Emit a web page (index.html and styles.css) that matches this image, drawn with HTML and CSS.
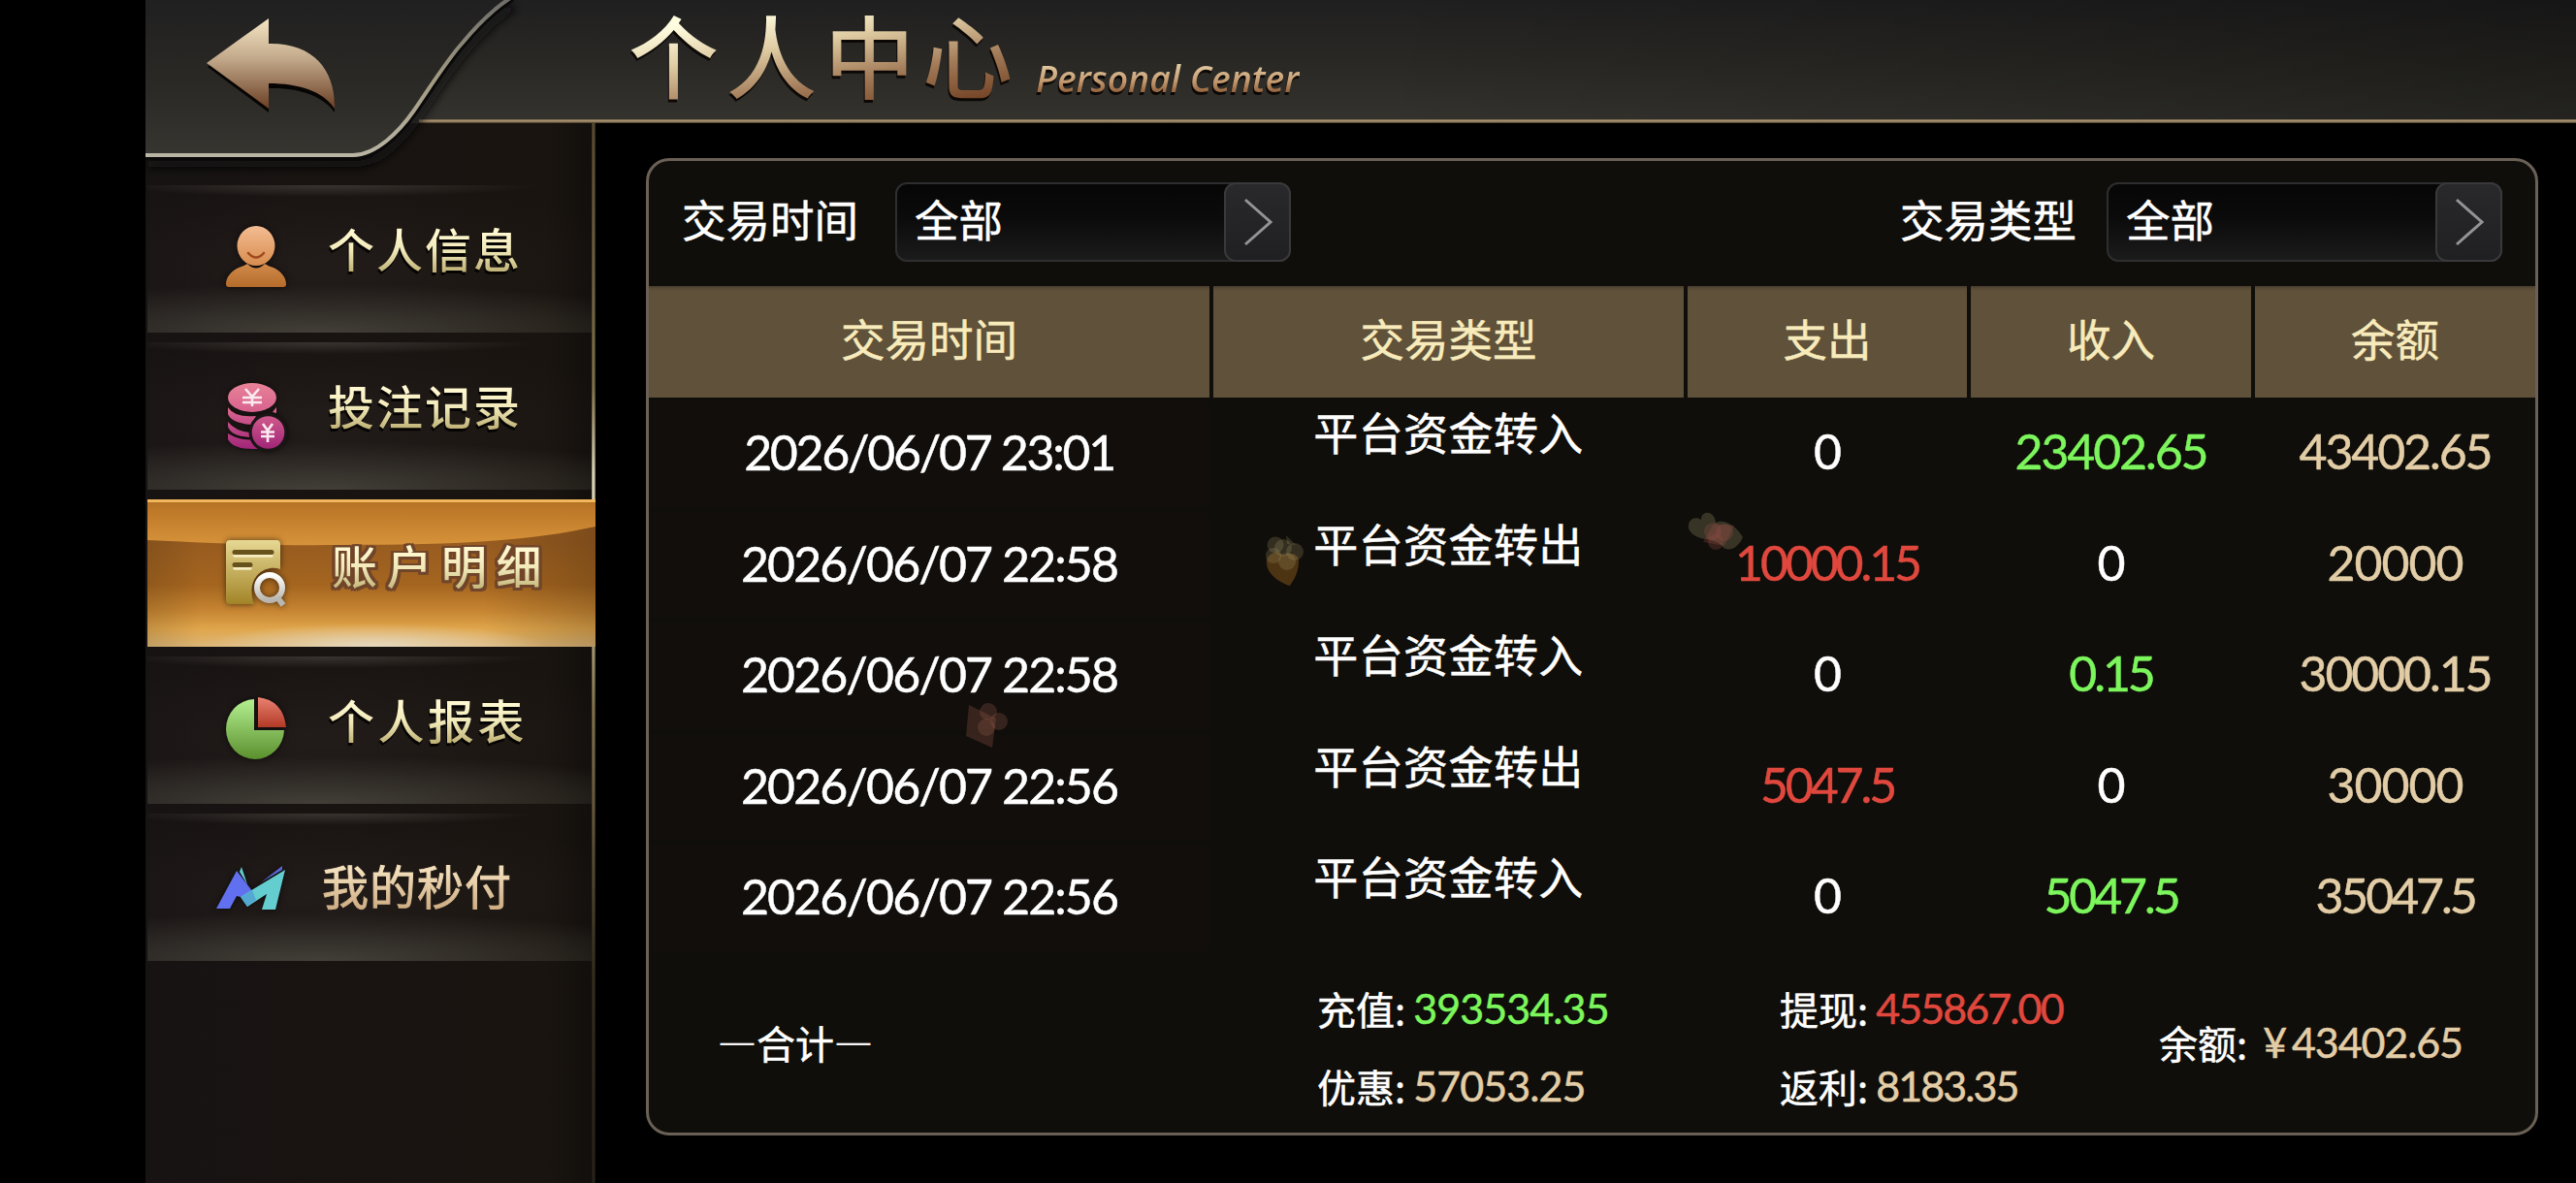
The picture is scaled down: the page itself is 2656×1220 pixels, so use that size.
FILE: index.html
```html
<!DOCTYPE html>
<html lang="zh-CN">
<head>
<meta charset="utf-8">
<title>个人中心</title>
<link rel="stylesheet" href="styles.css">
</head>
<body>
<div class="app">
  <header class="topbar">
    <svg class="topbar-corner" width="400" height="190" viewBox="0 0 400 190">
      <defs>
        <linearGradient id="cornerFill" x1="0" y1="0" x2="0" y2="1">
          <stop offset="0" stop-color="#212021"/><stop offset=".55" stop-color="#2a2925"/><stop offset="1" stop-color="#363530"/>
        </linearGradient>
        <linearGradient id="cornerLine" x1="0" y1="0" x2="0" y2="1">
          <stop offset="0" stop-color="#6d6c68"/><stop offset=".5" stop-color="#a09a82"/><stop offset="1" stop-color="#b9b4a3"/>
        </linearGradient>
        <linearGradient id="arrowFill" x1="0" y1="0" x2="0" y2="1">
          <stop offset="0" stop-color="#f4e6c4"/><stop offset=".45" stop-color="#c2a88a"/><stop offset="1" stop-color="#6b3f24"/>
        </linearGradient>
        <filter id="cornerShadow" x="-10%" y="-10%" width="120%" height="130%"><feGaussianBlur stdDeviation="5"/></filter>
      </defs>
      <path d="M0 160H214C238 160 262 135 276 115C290 95 312 60 327 44C340 28 355 12 376 -2" fill="none" stroke="#0b0a0d" stroke-width="8" filter="url(#cornerShadow)" transform="translate(3 9)"/>
      <path d="M0 0H374C355 12 340 28 327 44C312 60 290 95 276 115C262 135 238 160 214 160H0Z" fill="url(#cornerFill)"/>
      <path d="M0 163H215C240 163 265 137 279 117C293 97 315 62 330 46C343 30 358 14 379 0" fill="none" stroke="#0a0909" stroke-width="3"/>
      <path d="M0 160H214C238 160 262 135 276 115C290 95 312 60 327 44C340 28 355 12 376 -2" fill="none" stroke="url(#cornerLine)" stroke-width="4"/>
      <path d="M64 69L127 23V48C176 48 196 78 195 116C184 100 160 90 127 91V116Z" fill="#070504"/>
      <path d="M63 65L127 19V45C173 44 196 72 195 112C183 94 158 86 127 86V112Z" fill="url(#arrowFill)"/>
    </svg>
    <h1 class="title">个人中心</h1>
    <span class="subtitle">Personal Center</span>
  </header>

  <div class="content">
    <nav class="sidebar">
      <a class="nav-item">
        <svg class="nav-icon" viewBox="0 0 72 72">
          <defs><linearGradient id="face" x1="0" y1="0" x2="0" y2="1"><stop offset="0" stop-color="#f3bd92"/><stop offset="1" stop-color="#d88c4e"/></linearGradient>
          <linearGradient id="torso" x1="0" y1="0" x2="0" y2="1"><stop offset="0" stop-color="#d18a4b"/><stop offset="1" stop-color="#b56c2b"/></linearGradient></defs>
          <path d="M18 45C22 44 25 42 27 41Q36 50 45 41C48 43 51 44 54 45C62 49 67 55 67 62Q67 65 64 65H8Q5 65 5 62C5 55 10 49 18 45Z" fill="url(#torso)"/>
          <ellipse cx="36" cy="22.500" rx="19.500" ry="20.500" fill="url(#face)"/>
          <path d="M28 30Q36 39 44 30" fill="none" stroke="#a04a20" stroke-width="2.600" stroke-linecap="round"/>
        </svg>
        <span class="nav-label">个人信息</span>
      </a>
      <a class="nav-item">
        <svg class="nav-icon" viewBox="0 0 72 72">
          <defs><linearGradient id="stack" gradientUnits="userSpaceOnUse" x1="0" y1="2" x2="0" y2="70"><stop offset="0" stop-color="#e88298"/><stop offset=".4" stop-color="#d9658f"/><stop offset="1" stop-color="#a02578"/></linearGradient></defs>
          <g fill="url(#stack)">
            <path d="M7 54Q20 62 34 60L38 70Q12 71 7 60Z"/>
            <path d="M7 42Q15 52 30 53Q28 57 30 58Q10 57 7 47Z"/>
            <path d="M7 27Q14 38 36 36L31 45Q10 43 7 34Z"/>
            <path d="M57 27V33L53 32Z"/>
            <ellipse cx="32" cy="17" rx="25" ry="15"/>
            <circle cx="48.500" cy="53" r="20" fill="#1b1516"/>
            <circle cx="48.500" cy="53" r="16.800"/>
          </g>
          <g fill="none" stroke="#fbeaf0" stroke-width="2.600">
            <path d="M25 8L32 16L39 8M22 17H42M22 22H42M32 16V26"/>
            <path d="M43 44L48 51L53 44M41 52.500H55M41 57H55M48 51V63"/>
          </g>
        </svg>
        <span class="nav-label">投注记录</span>
      </a>
      <a class="nav-item nav-item--active">
        <svg class="nav-curve" viewBox="0 0 462 152" preserveAspectRatio="none">
          <defs><linearGradient id="swoosh" x1="0" y1="0" x2="0" y2="1"><stop offset="0" stop-color="#b07023"/><stop offset=".2" stop-color="#bc7728"/><stop offset="1" stop-color="#d7933a"/></linearGradient></defs>
          <path d="M0 0H462V28C390 44 310 47 200 47C110 48 50 44 0 42Z" fill="url(#swoosh)"/>
          <path d="M0 1.500H462" stroke="#f2b75c" stroke-width="3"/>
        </svg>
        <svg class="nav-icon" viewBox="0 0 72 72">
          <defs><linearGradient id="sheet" x1="0" y1="0" x2="0" y2="1"><stop offset="0" stop-color="#e6d894"/><stop offset="1" stop-color="#a28427"/></linearGradient>
          <linearGradient id="lens" x1="0" y1="0" x2="0" y2="1"><stop offset="0" stop-color="#fff"/><stop offset="1" stop-color="#b9b5ae"/></linearGradient></defs>
          <path d="M9 2H57Q61 2 61 6V32C46 26 24 40 34 68H9Q5 68 5 64V6Q5 2 9 2Z" fill="url(#sheet)"/>
          <path d="M14 18H52M14 31H30" stroke="#f6ecc2" stroke-width="3.500" stroke-linecap="round"/>
          <path d="M14 14.500H52M14 27.500H30" stroke="#66521a" stroke-width="5" stroke-linecap="round"/>
          <circle cx="50" cy="51" r="13" fill="none" stroke="url(#lens)" stroke-width="6"/>
          <path d="M58 61L64 69" stroke="#bab6b0" stroke-width="6"/>
        </svg>
        <span class="nav-label">账户明细</span>
      </a>
      <a class="nav-item">
        <svg class="nav-icon" viewBox="0 0 72 72">
          <defs><linearGradient id="pie" x1="0" y1="0" x2="0" y2="1"><stop offset="0" stop-color="#b4f090"/><stop offset="1" stop-color="#5b8f2e"/></linearGradient>
          <linearGradient id="slice" x1="0" y1="0" x2="0" y2="1"><stop offset="0" stop-color="#ea8272"/><stop offset="1" stop-color="#b23a26"/></linearGradient></defs>
          <path d="M34 4V36H65A30 31 0 1 1 34 4Z" fill="url(#pie)"/>
          <path d="M38 2Q64 5 67 33H38Z" fill="url(#slice)"/>
        </svg>
        <span class="nav-label nav-label--wide">个人报表</span>
      </a>
      <a class="nav-item">
        <svg class="nav-icon" viewBox="0 0 72 72">
          <path d="M-5 58L16 19L33 41L20 46L16 45L9 58Z" fill="#6170ee"/>
          <path d="M20 46L33 38L66 18L56 59H42L47 43L27 56Z" fill="#63cdd0"/>
          <path d="M20 46L32 39L36 49L27 56Z" fill="#54a9d2"/>
          <path d="M19 20L21 15L27 33Z" fill="#63cdd0"/>
          <path d="M41 31L63 14V18Z" fill="#5b66d6"/>
        </svg>
        <span class="nav-label nav-label--plain">我的秒付</span>
      </a>
    </nav>
    <div class="sidebar-edge"></div>

    <main class="main">
      <section class="panel">
        <div class="filters">
          <div class="filter">
            <span class="filter-label">交易时间</span>
            <div class="select"><span class="select-value">全部</span><span class="select-arrow"><svg width="30" height="48" viewBox="0 0 30 48"><path d="M2 1L28 24L2 47"/></svg></span></div>
          </div>
          <div class="filter">
            <span class="filter-label">交易类型</span>
            <div class="select"><span class="select-value">全部</span><span class="select-arrow"><svg width="30" height="48" viewBox="0 0 30 48"><path d="M2 1L28 24L2 47"/></svg></span></div>
          </div>
        </div>

        <div class="row row--head">
          <div>交易时间</div><div>交易类型</div><div>支出</div><div>收入</div><div>余额</div>
        </div>
        <div class="row">
          <div class="date date--tight">2026/06/07 23:01</div><div class="type">平台资金转入</div><div class="num">0</div><div class="num num--dec num--in">23402.65</div><div class="num num--dec num--gold">43402.65</div>
        </div>
        <div class="row">
          <div class="date">2026/06/07 22:58</div><div class="type">平台资金转出</div><div class="num num--tight num--out">10000.15</div><div class="num">0</div><div class="num num--gold">20000</div>
        </div>
        <div class="row">
          <div class="date">2026/06/07 22:58</div><div class="type">平台资金转入</div><div class="num">0</div><div class="num num--tight num--in">0.15</div><div class="num num--dec num--gold">30000.15</div>
        </div>
        <div class="row">
          <div class="date">2026/06/07 22:56</div><div class="type">平台资金转出</div><div class="num num--tight num--out">5047.5</div><div class="num">0</div><div class="num num--gold">30000</div>
        </div>
        <div class="row">
          <div class="date">2026/06/07 22:56</div><div class="type">平台资金转入</div><div class="num">0</div><div class="num num--tight num--in">5047.5</div><div class="num num--tight num--gold">35047.5</div>
        </div>

        <footer class="summary">
          <span class="summary-title">—合计—</span>
          <div class="summary-group">
            <div class="stat"><span>充值:</span><b class="num--in">393534.35</b></div>
            <div class="stat"><span>优惠:</span><b class="num--gold">57053.25</b></div>
          </div>
          <div class="summary-group">
            <div class="stat stat--tight"><span>提现:</span><b class="num--out">455867.00</b></div>
            <div class="stat stat--tight"><span>返利:</span><b class="num--gold">8183.35</b></div>
          </div>
          <div class="stat stat--balance"><span>余额:</span><b class="num--gold"><i>¥</i>43402.65</b></div>
        </footer>
      </section>
    </main>
  </div>

  <svg class="petal petal--a" width="44" height="56" viewBox="0 0 44 56">
    <path d="M1 26C6 16 14 18 19 22C26 18 35 20 34 30C33 42 28 48 25 53C14 50 -1 40 1 26Z" fill="#8a5a1c" fill-opacity=".5"/>
    <g fill="#a8976a" fill-opacity=".24"><circle cx="10" cy="11" r="8.500"/><circle cx="30" cy="18" r="9"/><circle cx="8" cy="22" r="8"/><circle cx="22" cy="28" r="9"/><circle cx="18" cy="14" r="9"/><path d="M21 1L31 11L22 10Z"/></g>
  </svg>
  <svg class="petal petal--b" width="60" height="44" viewBox="0 0 60 44">
    <path d="M1 18C0 8 8 5 14 9C14 -1 28 -1 29 12C38 8 50 15 57 27C52 38 44 42 37 38C32 30 22 30 18 29C8 27 3 23 1 18Z" fill="#857a58" fill-opacity=".35"/>
    <g fill="#a05048" fill-opacity=".26"><circle cx="26" cy="21" r="9"/><circle cx="38" cy="22" r="9"/><circle cx="29" cy="32" r="8"/><path d="M27 13L48 15L38 36L16 32Z"/></g>
  </svg>
  <svg class="petal petal--c" width="46" height="48" viewBox="0 0 46 48">
    <path d="M4 2L32 16L28 46L1 34Z" fill="#6e4236" fill-opacity=".42"/>
    <g fill="#8a5546" fill-opacity=".3"><circle cx="24" cy="9" r="9"/><circle cx="35" cy="19" r="9"/><circle cx="22" cy="25" r="9"/></g>
  </svg>
</div>
</body>
</html>
```

FILE: styles.css
```css
* { box-sizing: border-box; }

body {
  margin: 0;
  background: #000;
  color: #fff;
  font-family: "Noto Sans CJK SC", sans-serif;
}

.app {
  position: relative;
  width: 2656px;
  height: 1220px;
  padding-left: 150px;
  overflow: hidden;
  display: flex;
  flex-direction: column;
}

/* Top bar */
.topbar {
  position: relative;
  flex: none;
  height: 127px;
  padding-left: 498px;
  display: flex;
  background: linear-gradient(90deg, rgba(0,0,0,0) 50%, rgba(0,0,0,.3)),
    linear-gradient(#201f20, #292824 50%, #34332e);
}
.topbar::after {
  content: "";
  position: absolute;
  left: 282px;
  right: 0;
  bottom: 0;
  height: 4px;
  background: linear-gradient(#6b5b45, #b39d79 45%, #40321f);
}
.topbar-corner { position: absolute; left: 0; top: 0; z-index: 2; }

.title {
  margin: 0;
  font-size: 93px;
  line-height: 110px;
  font-weight: 500;
  letter-spacing: 8px;
  background: linear-gradient(170deg, #fffde0 18%, #e0cda4 38%, #a27a58 62%, #6b3a1c 88%);
  -webkit-background-clip: text;
  background-clip: text;
  color: transparent;
  filter: drop-shadow(-1px 3px 0 #0c0806);
}
.subtitle {
  margin: 54px 0 0 16px;
  height: 54px;
  font: italic 600 37.300px/54px "Open Sans", sans-serif;
  background: linear-gradient(#e0c8a0 25%, #c49a70 55%, #8a5833 80%);
  -webkit-background-clip: text;
  background-clip: text;
  color: transparent;
  filter: drop-shadow(-1px 3px 0 #0c0806);
}

/* Sidebar */
.content { flex: 1; display: flex; min-height: 0; }

.sidebar {
  width: 460px;
  padding: 64px 0 0 2px;
  display: flex;
  flex-direction: column;
  gap: 10px;
  background: linear-gradient(90deg, #171313, #19140f 90%, #120f0c);
}
.sidebar-edge {
  width: 4px;
  background: linear-gradient(90deg, rgba(0,0,0,.5), rgba(0,0,0,0) 40%, rgba(0,0,0,.5)),
    linear-gradient(#5f5034, #8a7a50 25%, #efe8c4 33%, #efe8c4 40%, #8d7c52 55%, #3a3222 80%, #2b2519);
}
.nav-item {
  position: relative;
  height: 152px;
  padding-left: 76px;
  display: flex;
  align-items: center;
  gap: 38px;
  background:
    radial-gradient(ellipse 220px 12px at 40% 0, rgba(90,84,78,.5), transparent),
    radial-gradient(ellipse 420px 50px at 38% 100%, rgba(88,86,76,.65), transparent),
    radial-gradient(ellipse 320px 90px at 40% 55%, rgba(44,36,34,.5), transparent);
}
.nav-icon {
  position: relative;
  flex: none;
  width: 72px;
  height: 72px;
  overflow: visible;
  filter: drop-shadow(0 0 3px rgba(0,0,0,.6));
}
.nav-label {
  position: relative;
  margin-top: -24px;
  font-size: 48px;
  line-height: 70px;
  font-weight: 500;
  letter-spacing: 2px;
  white-space: nowrap;
  background: linear-gradient(#fff7cf 30%, #f0e8b8 55%, #c2b478 85%);
  -webkit-background-clip: text;
  background-clip: text;
  color: transparent;
  filter: drop-shadow(-1px 3px 0 #050403);
}
.nav-label--wide { letter-spacing: 3.500px; }
.nav-label--plain {
  margin: -7px 0 0 -6px;
  font-weight: 400;
  letter-spacing: 1px;
  background-image: linear-gradient(#f3dfbb 30%, #cfae84 85%);
  -webkit-text-stroke: 1px transparent;
  filter: none;
}
.nav-item--active {
  width: 462px;
  background:
    radial-gradient(ellipse 180px 24px at 50% 100%, #e6d9bf, rgba(230,217,191,0)),
    linear-gradient(90deg, rgba(0,0,0,.12), transparent 12%, transparent 75%, rgba(0,0,0,.18)),
    linear-gradient(#985c20 30%, #a4651f 58%, #c58431 75%, #e0a64c 88%, #dcb677 100%);
}
.nav-curve { position: absolute; left: 0; top: 0; width: 100%; height: 100%; }
.nav-item--active .nav-label {
  margin: -17px 0 0 4px;
  padding-bottom: 2px;
  font-size: 47px;
  letter-spacing: 9.500px;
  filter: drop-shadow(3px 0 0 #70452a) drop-shadow(-3px 0 0 #70452a) drop-shadow(0 3px 0 #70452a) drop-shadow(0 -2px 0 #70452a);
}

/* Main panel */
.main { padding: 36px 0 0 52px; }

.panel {
  width: 1951px;
  height: 1008px;
  border: 3px solid #6a6056;
  border-radius: 24px;
  overflow: hidden;
  display: flex;
  flex-direction: column;
  background: #0f0e0a;
  -webkit-text-stroke: .5px currentColor;
}
.filters {
  height: 129px;
  padding: 0 34px;
  display: flex;
  align-items: center;
  justify-content: space-between;
}
.filter { display: flex; align-items: center; gap: 38px; margin-bottom: 3px; }
.filter:last-child { gap: 31px; }
.filter-label, .select-value { font-size: 45.500px; line-height: 66px; margin-top: -8px; }
.select {
  width: 408px;
  height: 82px;
  padding-left: 18px;
  display: flex;
  align-items: center;
  justify-content: space-between;
  border: 2px solid #2e2e2f;
  border-radius: 12px;
  background: linear-gradient(#070606, #0c0b0b 45%, #1c1b1b);
}
.select-arrow {
  width: 69px;
  height: 82px;
  margin-right: -2px;
  display: flex;
  align-items: center;
  justify-content: center;
  border: 2px solid #39393b;
  border-radius: 12px;
  background: linear-gradient(#29282b, #202022);
}
.select-arrow svg { fill: none; stroke: #949494; stroke-width: 3; overflow: visible; }

.row {
  flex: none;
  height: 114.500px;
  display: grid;
  grid-template-columns: 578px 485px 288px 289px 289px;
  gap: 4px;
  text-align: center;
}
.row--head { height: 115px; font-size: 45.500px; line-height: 107px; color: #f8ebbb; }
.row--head div { background: #60513a; box-shadow: inset 0 4px 3px -2px #4b3f2f; }
.date, .num {
  font-family: Lato, "Noto Sans CJK SC", sans-serif;
  font-size: 50px;
  line-height: 111px;
  letter-spacing: -1px;
  white-space: nowrap;
}
.date { margin: 4px 0 2px; line-height: 104px; background: #120e0c; letter-spacing: -1.900px; }
.date--tight { letter-spacing: -2.300px; }
.num--dec { letter-spacing: -2.100px; }
.num--tight { letter-spacing: -3.100px; }
.type { font-size: 46px; line-height: 68px; letter-spacing: .4px; }
.num--in { color: #7cf65c; }
.num--out { color: #e0483e; }
.num--gold { color: #e3cda6; }

/* Totals */
.summary { flex: 1; padding-left: 71px; display: flex; align-items: center; font-size: 40px; }
.summary-title { width: 618px; }
.summary-group { width: 477px; padding-top: 10px; display: flex; flex-direction: column; gap: 20px; }
.stat { display: flex; align-items: center; gap: 8px; line-height: 60px; white-space: nowrap; }
.stat b { font: 400 43px/60px Lato, sans-serif; letter-spacing: -.900px; }
.stat--tight b { letter-spacing: -1.900px; }
.stat--balance { margin-left: -86px; gap: 16px; }
.stat--balance b { letter-spacing: -1.100px; }
.stat i { font-style: normal; margin-right: 6px; }

/* Falling petals drawn above the table */
.petal { position: absolute; }
.petal--a { left: 1305px; top: 551px; }
.petal--b { left: 1740px; top: 527px; }
.petal--c { left: 995px; top: 725px; }
```
